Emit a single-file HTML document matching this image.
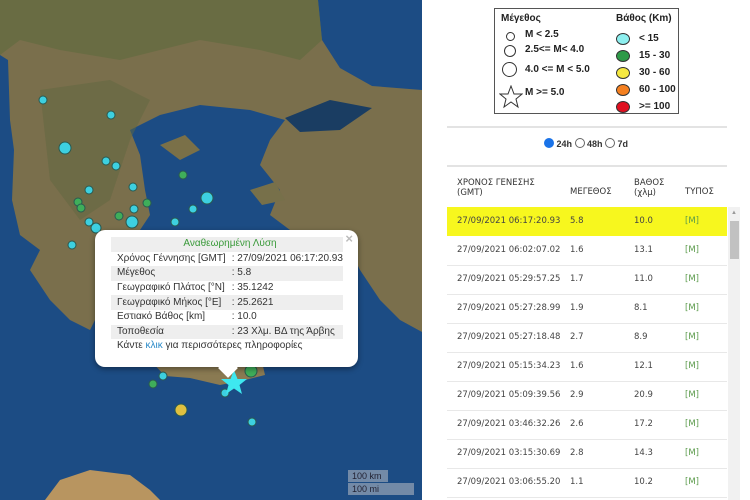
<!DOCTYPE html>
<html><head><meta charset="utf-8"><style>
body{margin:0;width:750px;height:500px;overflow:hidden;background:#fff;font-family:"Liberation Sans",sans-serif;position:relative}
.map{position:absolute;left:0;top:0;width:422px;height:500px}
.pop{position:absolute;left:95px;top:230px;width:263px;height:137px;background:#fff;border-radius:10px;box-shadow:0 2px 6px rgba(0,0,0,.4);font-size:10px;color:#333}
.pop .tip{position:absolute;left:126px;bottom:-8px;width:14px;height:14px;background:#fff;transform:rotate(45deg)}
.pop .x{position:absolute;right:5px;top:1px;color:#bbb;font-size:13px;font-weight:bold}
.pop table{position:absolute;left:16px;top:7px;width:231px;border-collapse:collapse}
.pop td{height:14.6px;padding:0 0 0 6px;white-space:nowrap;line-height:14px}
.g{background:#eee}
.lg{position:absolute;left:494px;top:8px;width:183px;height:104px;border:1px solid #555;font-size:10px;font-weight:bold;color:#222}
.lg div{position:absolute;white-space:nowrap}
.c{border-radius:50%;border:1px solid #333;position:absolute}
.hr{position:absolute;left:447px;width:280px;height:2px;background:#e3e3e3}
.tb{position:absolute;left:447px;font-size:8.5px;color:#333;font-family:"DejaVu Sans",sans-serif}
.row{position:absolute;left:447px;width:280px;height:29px;border-bottom:1px solid #e8e8e8;font-size:8.5px;color:#444;font-family:"DejaVu Sans",sans-serif}
.row span{position:absolute;top:9px}
</style></head><body>
<svg class="map" viewBox="0 0 422 500" xmlns="http://www.w3.org/2000/svg">
<rect width="422" height="500" fill="#1c4c84"/>
<path d="M0,0H318L322,40L340,68L372,86L422,90V332L400,320L380,300L360,270L345,240L330,230L300,232L290,230L270,215L280,190L260,165L270,140L285,120L250,110L200,105L160,115L130,130L140,155L145,190L150,215L140,230L110,240L100,260L110,290L90,330L70,320L50,300L30,270L40,250L20,235L12,200L14,150L10,120L8,60L0,55Z" fill="#7a6f4c"/>
<path d="M0,0H318L322,40L300,60L260,50L200,40L120,60L60,50L20,40L0,55Z" fill="#5e6a3e" opacity=".6"/>
<path d="M40,90L110,80L150,100L130,140L110,200L80,220L50,180Z" fill="#5f6840" opacity=".5"/>
<path d="M285,118L330,100L372,108L340,130L300,132Z" fill="#1a3d62"/>
<path d="M160,145L185,135L200,150L180,160Z" fill="#7a7048"/>
<path d="M250,190L275,182L285,200L262,205Z" fill="#77704a"/>
<path d="M150,360L175,355L210,356L240,358L262,362L265,375L245,380L220,385L190,378L165,376Z" fill="#8a7a52"/>
<path d="M45,500L60,480L90,470L130,475L150,490L160,500Z" fill="#b89560"/>
<g stroke="#2a5a50" stroke-width="1">
<g fill="#3dd0e0"><circle cx="43" cy="100" r="4"/><circle cx="111" cy="115" r="4"/><circle cx="65" cy="148" r="6"/><circle cx="106" cy="161" r="4"/><circle cx="116" cy="166" r="4"/><circle cx="89" cy="190" r="4"/><circle cx="133" cy="187" r="4"/><circle cx="207" cy="198" r="6"/><circle cx="193" cy="209" r="4"/><circle cx="134" cy="209" r="4"/><circle cx="132" cy="222" r="6"/><circle cx="89" cy="222" r="4"/><circle cx="96" cy="228" r="5"/><circle cx="175" cy="222" r="4"/><circle cx="72" cy="245" r="4"/><circle cx="163" cy="376" r="4"/><circle cx="225" cy="393" r="4"/><circle cx="252" cy="422" r="4"/></g>
<g fill="#3fae5a"><circle cx="183" cy="175" r="4"/><circle cx="78" cy="202" r="4"/><circle cx="81" cy="208" r="4"/><circle cx="147" cy="203" r="4"/><circle cx="119" cy="216" r="4"/><circle cx="153" cy="384" r="4"/><circle cx="251" cy="371" r="6"/></g>
<circle cx="181" cy="410" r="6" fill="#e0c040"/>
</g>
<polygon points="234,370 237.5,379 247,379 239.5,385 242,394 234,388.5 226,394 228.5,385 221,379 230.5,379" fill="#3ee8f0"/>
<rect x="348" y="470" width="40" height="12" fill="#8a9ab0" opacity=".8"/><rect x="348" y="483" width="66" height="12" fill="#8a9ab0" opacity=".8"/>
<text x="352" y="479" font-size="9" fill="#223" font-family="Liberation Sans">100 km</text>
<text x="352" y="492" font-size="9" fill="#223" font-family="Liberation Sans">100 mi</text>
</svg>
<div class="pop"><div class="tip"></div><div class="x">×</div>
<table>
<tr class="g"><td colspan="2" style="text-align:center;color:#3a9a3a">Αναθεωρημένη Λύση</td></tr>
<tr><td style="width:110px">Χρόνος Γέννησης [GMT]</td><td>: 27/09/2021 06:17:20.93</td></tr>
<tr class="g"><td>Μέγεθος</td><td>: 5.8</td></tr>
<tr><td>Γεωγραφικό Πλάτος [°N]</td><td>: 35.1242</td></tr>
<tr class="g"><td>Γεωγραφικό Μήκος [°E]</td><td>: 25.2621</td></tr>
<tr><td>Εστιακό Βάθος [km]</td><td>: 10.0</td></tr>
<tr class="g"><td>Τοποθεσία</td><td>: 23 Χλμ. ΒΔ της Άρβης</td></tr>
<tr><td colspan="2">Κάντε <span style="color:#2a8ac8">κλικ</span> για περισσότερες πληροφορίες</td></tr>
</table></div>

<div class="lg">
<div style="left:6px;top:4px">Μέγεθος</div>
<div style="left:121px;top:4px">Βάθος (Km)</div>
<div class="c" style="left:11px;top:23px;width:7px;height:7px"></div><div style="left:30px;top:20px">M &lt; 2.5</div>
<div class="c" style="left:9px;top:36px;width:10px;height:10px"></div><div style="left:30px;top:35px">2.5&lt;= M&lt; 4.0</div>
<div class="c" style="left:7px;top:53px;width:13px;height:13px"></div><div style="left:30px;top:55px">4.0 &lt;= M &lt; 5.0</div>
<svg style="position:absolute;left:4px;top:76px" width="24" height="24"><polygon points="12,1 15,9 23,9 17,14 19,22 12,17 5,22 7,14 1,9 9,9" fill="none" stroke="#333"/></svg>
<div style="left:30px;top:78px">M &gt;= 5.0</div>
<div class="c" style="left:121px;top:24px;width:12px;height:10px;background:#8ef0f0"></div><div style="left:144px;top:24px">&lt; 15</div>
<div class="c" style="left:121px;top:41px;width:12px;height:10px;background:#2e9a48"></div><div style="left:144px;top:41px">15 - 30</div>
<div class="c" style="left:121px;top:58px;width:12px;height:10px;background:#f5e840"></div><div style="left:144px;top:58px">30 - 60</div>
<div class="c" style="left:121px;top:75px;width:12px;height:10px;background:#f58020"></div><div style="left:144px;top:75px">60 - 100</div>
<div class="c" style="left:121px;top:92px;width:12px;height:10px;background:#e01020"></div><div style="left:144px;top:92px">&gt;= 100</div>
</div>
<div class="hr" style="top:126px"></div>
<div style="position:absolute;left:544px;top:138px;font-size:9px;font-weight:bold;color:#333;white-space:nowrap">
<span style="display:inline-block;width:8px;height:8px;border-radius:50%;background:#1a73e8;vertical-align:-1px;border:1px solid #1a73e8"></span> 24h <span style="display:inline-block;width:8px;height:8px;border-radius:50%;border:1px solid #666;vertical-align:-1px"></span> 48h <span style="display:inline-block;width:8px;height:8px;border-radius:50%;border:1px solid #666;vertical-align:-1px"></span> 7d</div>
<div class="hr" style="top:165px"></div>
<div class="tb" style="left:457px;top:178px;line-height:10px">ΧΡΟΝΟΣ ΓΕΝΕΣΗΣ<br>(GMT)</div>
<div class="tb" style="left:570px;top:187px">ΜΕΓΕΘΟΣ</div>
<div class="tb" style="left:634px;top:178px;line-height:10px">ΒΑΘΟΣ<br>(χλμ)</div>
<div class="tb" style="left:685px;top:187px">ΤΥΠΟΣ</div>
<div class="row" style="top:207px;height:29px;background:#f7f71e;border:none"><span style="left:10px">27/09/2021 06:17:20.93</span><span style="left:123px">5.8</span><span style="left:187px">10.0</span><span style="left:238px;color:#5a9a4a">[M]</span></div>
<div class="row" style="top:236px"><span style="left:10px">27/09/2021 06:02:07.02</span><span style="left:123px">1.6</span><span style="left:187px">13.1</span><span style="left:238px;color:#5a9a4a">[M]</span></div>
<div class="row" style="top:265px"><span style="left:10px">27/09/2021 05:29:57.25</span><span style="left:123px">1.7</span><span style="left:187px">11.0</span><span style="left:238px;color:#5a9a4a">[M]</span></div>
<div class="row" style="top:294px"><span style="left:10px">27/09/2021 05:27:28.99</span><span style="left:123px">1.9</span><span style="left:187px">8.1</span><span style="left:238px;color:#5a9a4a">[M]</span></div>
<div class="row" style="top:323px"><span style="left:10px">27/09/2021 05:27:18.48</span><span style="left:123px">2.7</span><span style="left:187px">8.9</span><span style="left:238px;color:#5a9a4a">[M]</span></div>
<div class="row" style="top:352px"><span style="left:10px">27/09/2021 05:15:34.23</span><span style="left:123px">1.6</span><span style="left:187px">12.1</span><span style="left:238px;color:#5a9a4a">[M]</span></div>
<div class="row" style="top:381px"><span style="left:10px">27/09/2021 05:09:39.56</span><span style="left:123px">2.9</span><span style="left:187px">20.9</span><span style="left:238px;color:#5a9a4a">[M]</span></div>
<div class="row" style="top:410px"><span style="left:10px">27/09/2021 03:46:32.26</span><span style="left:123px">2.6</span><span style="left:187px">17.2</span><span style="left:238px;color:#5a9a4a">[M]</span></div>
<div class="row" style="top:439px"><span style="left:10px">27/09/2021 03:15:30.69</span><span style="left:123px">2.8</span><span style="left:187px">14.3</span><span style="left:238px;color:#5a9a4a">[M]</span></div>
<div class="row" style="top:468px"><span style="left:10px">27/09/2021 03:06:55.20</span><span style="left:123px">1.1</span><span style="left:187px">10.2</span><span style="left:238px;color:#5a9a4a">[M]</span></div>
<div style="position:absolute;left:728px;top:207px;width:12px;height:293px;background:#f1f1f1"></div>
<div style="position:absolute;left:730px;top:221px;width:9px;height:38px;background:#c1c1c1"></div>
<div style="position:absolute;left:731px;top:210px;font-size:6px;color:#999">▲</div>
</body></html>
